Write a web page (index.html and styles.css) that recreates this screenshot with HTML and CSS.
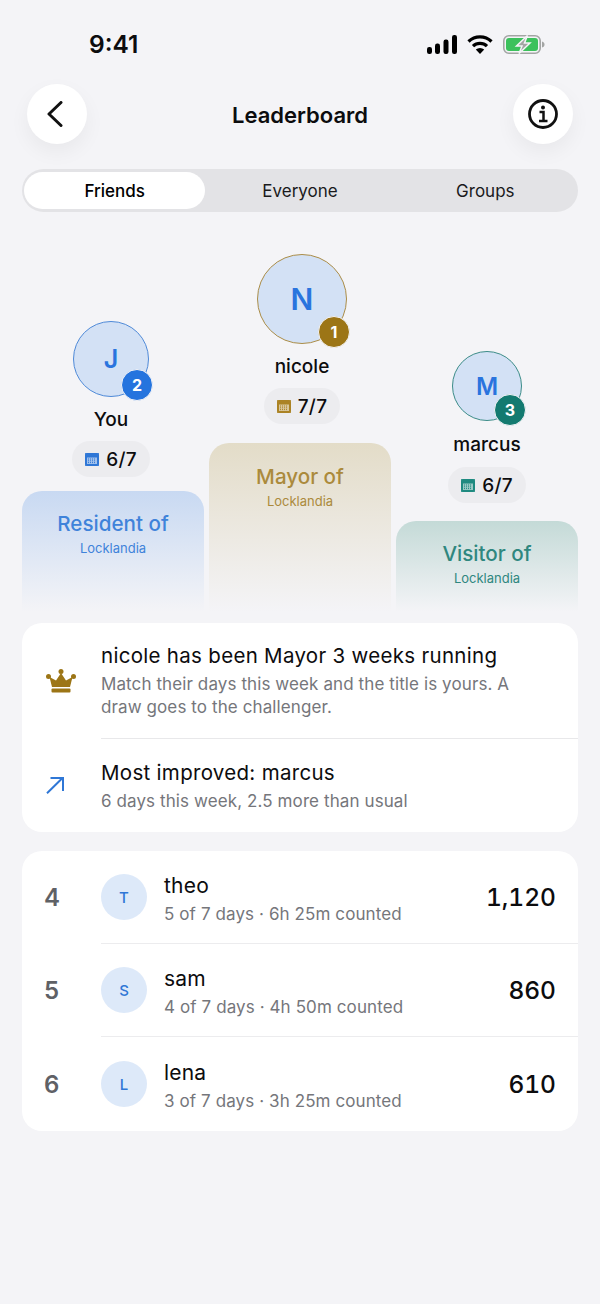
FILE: index.html
```html
<!DOCTYPE html>
<html lang="en">
<head>
    <meta charset="UTF-8">
    <meta name="viewport" content="width=device-width, initial-scale=1.0">
    <title>Leaderboard</title>
    <link rel="stylesheet" href="styles.css">
</head>
<body>
    <div class="status-bar">
        <span class="time">9:41</span>
        <div class="status-icons">
            <svg width="30" height="19" viewBox="0 0 30 19"><rect x="0" y="12" width="5" height="7" rx="2.2"/><rect x="8" y="8.5" width="5" height="10.5" rx="2.2"/><rect x="16.500" y="4.500" width="5" height="14.500" rx="2.200"/><rect x="25" y="0" width="5" height="19" rx="2.200"/></svg>
            <svg width="26" height="19" viewBox="0 0 26 19"><path d="M1.500 6.500a16.500 16.500 0 0 1 23 0" fill="none" stroke="#000" stroke-width="3.200"/><path d="M6 11.200a10 10 0 0 1 14 0" fill="none" stroke="#000" stroke-width="3.200"/><path d="M13 19l-4.200-4.400a6 6 0 0 1 8.400 0z"/></svg>
            <svg width="42" height="19" viewBox="0 0 42 19"><rect x="0.800" y="0.800" width="36.400" height="17.400" rx="5" fill="none" stroke="#a3a5a4" stroke-width="1.600"/><rect x="3" y="3" width="32" height="13" rx="3" fill="#3cc15c"/><path d="M39 6.500c1.800 .5 2.500 1.500 2.500 3s-.7 2.500-2.500 3z" fill="#a3a5a4"/><path d="M24.500 0.500L13.500 11h5.500l-3 7.500L27 8h-5.500z" fill="#a3a5a4" stroke="#f4f4f7" stroke-width="1.500"/></svg>
        </div>
    </div>

    <header class="top-bar">
        <button class="round-btn">
            <svg class="back-icon" width="16" height="26" viewBox="0 0 16 26"><path d="M14 1.500L2 13l12 11.500" fill="none" stroke="#111" stroke-width="3" stroke-linecap="round" stroke-linejoin="round"/></svg>
        </button>
        <h1>Leaderboard</h1>
        <button class="round-btn">
            <svg width="30" height="30" viewBox="0 0 30 30"><circle cx="15" cy="15" r="13.500" fill="none" stroke="#111" stroke-width="2.800"/><circle cx="15" cy="8.500" r="2" fill="#111"/><path d="M11.500 13h4v9M11 22h8.500" fill="none" stroke="#111" stroke-width="2.500"/></svg>
        </button>
    </header>

    <nav class="tabs">
        <div class="tab active">Friends</div>
        <div class="tab">Everyone</div>
        <div class="tab">Groups</div>
    </nav>

    <section class="podium">
        <div class="place second">
            <div class="place-head">
                <div class="avatar">J<span class="rank-badge">2</span></div>
                <div class="place-name">You</div>
                <div class="days">
                    <svg class="cal" width="14" height="13" viewBox="0 0 14 13"><rect width="14" height="13" rx="2"/><rect x="1.500" y="4" width="11" height="7.500" fill="#fff" opacity=".55"/><path d="M3 6h8M3 7.800h8M3 9.600h8" stroke-dasharray="1 1" stroke-width="1"/></svg>
                    6/7
                </div>
            </div>
            <div class="block">
                <div class="block-title">Resident of</div>
                <div class="block-sub">Locklandia</div>
            </div>
        </div>
        <div class="place first">
            <div class="place-head">
                <div class="avatar">N<span class="rank-badge">1</span></div>
                <div class="place-name">nicole</div>
                <div class="days">
                    <svg class="cal" width="14" height="13" viewBox="0 0 14 13"><rect width="14" height="13" rx="2"/><rect x="1.500" y="4" width="11" height="7.500" fill="#fff" opacity=".55"/><path d="M3 6h8M3 7.800h8M3 9.600h8" stroke-dasharray="1 1" stroke-width="1"/></svg>
                    7/7
                </div>
            </div>
            <div class="block">
                <div class="block-title">Mayor of</div>
                <div class="block-sub">Locklandia</div>
            </div>
        </div>
        <div class="place third">
            <div class="place-head">
                <div class="avatar">M<span class="rank-badge">3</span></div>
                <div class="place-name">marcus</div>
                <div class="days">
                    <svg class="cal" width="14" height="13" viewBox="0 0 14 13"><rect width="14" height="13" rx="2"/><rect x="1.500" y="4" width="11" height="7.500" fill="#fff" opacity=".55"/><path d="M3 6h8M3 7.800h8M3 9.600h8" stroke-dasharray="1 1" stroke-width="1"/></svg>
                    6/7
                </div>
            </div>
            <div class="block">
                <div class="block-title">Visitor of</div>
                <div class="block-sub">Locklandia</div>
            </div>
        </div>
    </section>

    <section class="card insights">
        <div class="insight">
            <div class="insight-icon">
                <svg width="30" height="24" viewBox="0 0 30 24" fill="#9c7516"><circle cx="15" cy="2.500" r="2.500"/><circle cx="2.500" cy="7.500" r="2.500"/><circle cx="27.500" cy="7.500" r="2.500"/><path d="M15 4l5 7.500 6.500-3.500-2.500 10H6L3.500 8 10 11.500z"/><rect x="5.500" y="19.500" width="19" height="4" rx="1"/></svg>
            </div>
            <div class="insight-text">
                <div class="insight-title">nicole has been Mayor 3 weeks running</div>
                <div class="insight-sub">Match their days this week and the title is yours. A draw goes to the challenger.</div>
            </div>
        </div>
        <div class="insight">
            <div class="insight-icon">
                <svg width="18" height="17" viewBox="0 0 18 17"><path d="M1 16.200L16.500 1M4.500 1h12.500v13" fill="none" stroke="#2f77d6" stroke-width="2"/></svg>
            </div>
            <div class="insight-text">
                <div class="insight-title">Most improved: marcus</div>
                <div class="insight-sub">6 days this week, 2.5 more than usual</div>
            </div>
        </div>
    </section>

    <section class="card standings">
        <div class="row">
            <div class="row-rank">4</div>
            <div class="row-main">
                <div class="row-avatar">T</div>
                <div class="row-text">
                    <div class="row-name">theo</div>
                    <div class="row-sub">5 of 7 days · 6h 25m counted</div>
                </div>
                <div class="row-score">1,120</div>
            </div>
        </div>
        <div class="row">
            <div class="row-rank">5</div>
            <div class="row-main">
                <div class="row-avatar">S</div>
                <div class="row-text">
                    <div class="row-name">sam</div>
                    <div class="row-sub">4 of 7 days · 4h 50m counted</div>
                </div>
                <div class="row-score">860</div>
            </div>
        </div>
        <div class="row">
            <div class="row-rank">6</div>
            <div class="row-main">
                <div class="row-avatar">L</div>
                <div class="row-text">
                    <div class="row-name">lena</div>
                    <div class="row-sub">3 of 7 days · 3h 25m counted</div>
                </div>
                <div class="row-score">610</div>
            </div>
        </div>
    </section>
</body>
</html>
```

FILE: styles.css
```css
* {
    box-sizing: border-box;
}

body {
    font-family: 'Inter', 'Noto Sans', sans-serif;
    background-color: #f4f4f7;
    color: #0c0c0e;
    margin: 0;
    padding: 0 22px;
    min-height: 1304px;
}

.status-bar {
    display: flex;
    justify-content: space-between;
    align-items: center;
    height: 34px;
    margin-top: 28px;
    padding: 0 33px 0 67px;
}

.time {
    margin-top: -2px;
    font-size: 24.500px;
    font-weight: 600;
}

.status-icons {
    display: flex;
    align-items: center;
    gap: 10px;
    margin-top: -2px;
}

.top-bar {
    display: flex;
    justify-content: space-between;
    align-items: center;
    margin-top: 22px;
    padding: 0 5px;
}

.top-bar h1 {
    font-size: 22px;
    font-weight: 600;
    margin: 2px 0 0;
}

.round-btn {
    display: flex;
    align-items: center;
    justify-content: center;
    width: 60px;
    height: 60px;
    padding: 0;
    border: none;
    border-radius: 50%;
    background-color: #fff;
    box-shadow: 0 8px 20px rgba(0, 0, 0, 0.05);
}

.back-icon {
    margin-right: 4px;
}

.tabs {
    display: grid;
    grid-template-columns: repeat(3, 1fr);
    height: 43px;
    margin-top: 25px;
    padding: 3px 0;
    border-radius: 22px;
    background-color: #e3e3e6;
}

.tab {
    display: flex;
    align-items: center;
    justify-content: center;
    font-size: 17px;
    color: #1a1a1c;
}

.tab.active {
    margin: 0 2px;
    background-color: #fff;
    border-radius: 19px;
    font-weight: 500;
    color: #000;
}

.podium {
    display: flex;
    align-items: flex-end;
    gap: 5px;
    height: 400px;
}

.place {
    flex: 1;
    display: flex;
    flex-direction: column;
    align-items: center;
}

.place-head {
    display: flex;
    flex-direction: column;
    align-items: center;
}

.second .place-head {
    margin-right: 4px;
}

.first .place-head {
    margin-left: 4px;
}

.avatar {
    position: relative;
    display: flex;
    align-items: center;
    justify-content: center;
    border-radius: 50%;
    background-color: #d3e1f5;
    color: #2a74de;
    font-weight: 600;
}

.second .avatar {
    width: 76px;
    height: 76px;
    font-size: 25px;
    border: 1.500px solid #4f8ad8;
}

.first .avatar {
    width: 90px;
    height: 90px;
    font-size: 30px;
    border: 1.500px solid #ab8d48;
}

.third .avatar {
    width: 70px;
    height: 70px;
    font-size: 24px;
    border: 1.500px solid #3c8c88;
}

.rank-badge {
    position: absolute;
    right: -5px;
    bottom: -5px;
    display: flex;
    align-items: center;
    justify-content: center;
    width: 32px;
    height: 32px;
    border: 1.500px solid #f4f4f7;
    border-radius: 50%;
    color: #fff;
    font-size: 16px;
    font-weight: 700;
}

.first .rank-badge {
    right: -4px;
    background-color: #9c7516;
}

.second .rank-badge {
    background-color: #2574de;
}

.third .rank-badge {
    bottom: -6px;
    background-color: #137a70;
}

.place-name {
    margin-top: 11px;
    font-size: 19px;
    font-weight: 550;
    line-height: 24px;
}

.days {
    display: flex;
    align-items: center;
    gap: 7px;
    height: 36px;
    margin-top: 9px;
    padding: 0 13px;
    border-radius: 18px;
    background-color: #ececef;
    font-size: 19px;
    font-weight: 500;
    letter-spacing: 0.3px;
}

.third .place-name {
    margin-top: 12px;
}

.third .days {
    margin-top: 10px;
}

.block {
    width: 100%;
    padding-top: 20px;
    border-radius: 20px 20px 0 0;
    text-align: center;
}

.second .block {
    height: 121px;
    margin-top: 14px;
    background: linear-gradient(#c8d9f2, #f4f4f7);
    color: #3f83da;
}

.first .block {
    height: 169px;
    margin-top: 19px;
    padding-top: 21px;
    background: linear-gradient(#e3dcc8, #f4f4f7);
    color: #ab8a3c;
}

.third .block {
    height: 91px;
    margin-top: 18px;
    background: linear-gradient(#c4dad7, #f4f4f7);
    color: #2f877f;
}

.block-title {
    font-size: 20.600px;
    font-weight: 500;
    line-height: 26px;
}

.block-sub {
    margin-top: 2px;
    font-size: 13px;
    line-height: 18px;
}

.second .cal {
    fill: #2f77d6;
    stroke: #2f77d6;
}

.first .cal {
    fill: #ab8325;
    stroke: #ab8325;
}

.third .cal {
    fill: #1f8a80;
    stroke: #1f8a80;
}

.card {
    background-color: #fff;
    border-radius: 20px;
}

.insights {
    margin-top: 11px;
}

.insight {
    display: flex;
    align-items: center;
}

.insight:first-child {
    height: 116px;
}

.insight:last-child {
    height: 93px;
}

.insight-icon {
    flex: 0 0 79px;
    padding-left: 24px;
    display: flex;
}

.insight-text {
    flex: 1;
    align-self: stretch;
    padding-top: 20px;
}

.insight:first-child .insight-text {
    padding-top: 19px;
    border-bottom: 1.500px solid #e8e8ea;
}

.insight-title {
    font-size: 20.500px;
    letter-spacing: 0.300px;
    line-height: 28px;
}

.insight-sub {
    margin-top: 3px;
    padding-right: 40px;
    font-size: 17px;
    letter-spacing: 0.100px;
    line-height: 23px;
    color: #75767b;
}

.standings {
    margin-top: 19px;
}

.row {
    display: flex;
    align-items: stretch;
    height: 93px;
}

.row:last-child {
    height: 94px;
}

.row-rank {
    flex: 0 0 79px;
    padding-left: 22px;
    display: flex;
    align-items: center;
    font-size: 24px;
    font-weight: 600;
    color: #5f6166;
}

.row-main {
    flex: 1;
    display: flex;
    align-items: center;
    padding-right: 22px;
}

.row:not(:last-child) .row-main {
    border-bottom: 1px solid #ececee;
}

.row-avatar {
    flex: 0 0 46px;
    height: 46px;
    display: flex;
    align-items: center;
    justify-content: center;
    border-radius: 50%;
    background-color: #dde9f9;
    color: #2f77d6;
    font-size: 15px;
    font-weight: 500;
}

.row-text {
    flex: 1;
    margin-left: 17px;
    padding-top: 3px;
}

.row-name {
    font-size: 21px;
    letter-spacing: 0.200px;
    line-height: 28px;
}

.row-sub {
    margin-top: 2px;
    font-size: 17px;
    letter-spacing: 0.100px;
    line-height: 24px;
    color: #75767b;
}

.row-score {
    font-size: 24.500px;
    font-weight: 500;
    font-variant-numeric: tabular-nums;
}
```
